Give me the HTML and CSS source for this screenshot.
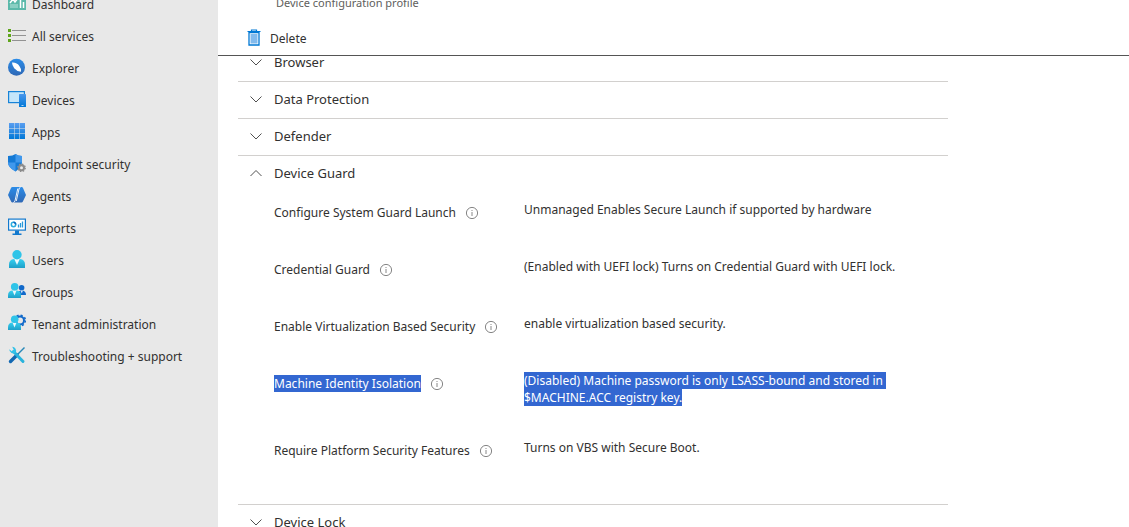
FILE: index.html
```html
<!DOCTYPE html>
<html lang="en">
<head>
  <meta charset="UTF-8" />
  <meta name="viewport" content="width=device-width, initial-scale=1.0"/>
  <title>Device configuration profile</title>
  <link rel="stylesheet" href="styles.css">
</head>
<body>
  <!-- shared gradients and symbols -->
  <svg class="defs" width="0" height="0" aria-hidden="true">
    <defs>
      <linearGradient id="blue" x1="0" y1="0" x2="0" y2="1"><stop offset="0" stop-color="#2b8ce8"/><stop offset="1" stop-color="#2f68b5"/></linearGradient>
      <linearGradient id="tiles" gradientUnits="userSpaceOnUse" x1="0" y1="1" x2="0" y2="17"><stop offset="0" stop-color="#5a9ef0"/><stop offset="1" stop-color="#0078d7"/></linearGradient>
      <linearGradient id="cyan" x1="0" y1="0" x2="0" y2="1"><stop offset="0" stop-color="#35d0f0"/><stop offset="1" stop-color="#1f9fc8"/></linearGradient>
      <symbol id="chevron-down" viewBox="0 0 14 14"><path d="M1.500 4.500L7 10l5.500-5.500" fill="none" stroke="#505050"/></symbol>
      <symbol id="chevron-up" viewBox="0 0 14 14"><path d="M1.500 10L7 4.500l5.500 5.500" fill="none" stroke="#505050"/></symbol>
      <symbol id="info" viewBox="0 0 14 14"><circle cx="7" cy="7" r="5.600" fill="none" stroke="#777" stroke-width=".9"/><path d="M7 6v4M7 4v1" stroke="#888"/></symbol>
    </defs>
  </svg>

  <div class="app">
    <nav class="sidebar">
      <ul class="nav-list">
        <li><a class="nav-link" href="#dashboard">
          <svg class="nav-icon" viewBox="0 0 18 18"><rect y="1" width="18" height="15" fill="#5bb9aa"/><path d="M2 9l3-4 2 3 3-4M12.500 14V6M15.500 14V8" fill="none" stroke="#fff" stroke-width="1.500"/><path d="M2 13h8M2 11h8" stroke="#b9e5dc"/></svg>
          Dashboard</a></li>
        <li><a class="nav-link" href="#services">
          <svg class="nav-icon" viewBox="0 0 18 18"><path d="M4 4.500h14M4 9.500h14M4 14.500h14" stroke="#929292" stroke-width="1.200"/><path d="M0 3h3v3H0zM0 8h3v3H0zM0 13h3v3H0z" fill="#5fa51b"/></svg>
          All services</a></li>
        <li><a class="nav-link" href="#explorer">
          <svg class="nav-icon" viewBox="0 0 18 18"><circle cx="8.500" cy="9.300" r="8.500" fill="url(#blue)"/><path d="M4 4.600Q9 4.300 11.500 8.300Q13.500 10.800 13 13.800Q8.500 13.300 6.200 10.300Q4 7.300 4 4.600z" fill="#fff"/></svg>
          Explorer</a></li>
        <li><a class="nav-link" href="#devices">
          <svg class="nav-icon" viewBox="0 0 18 18"><rect x=".6" y="1.600" width="15.800" height="11" fill="#c5e6fa" stroke="#1683d8" stroke-width="1.200"/><rect x="11" y="4" width="7" height="13" rx=".6" fill="url(#tiles)"/><path d="M13.500 15.500h2" stroke="#fff" stroke-width=".7"/></svg>
          Devices</a></li>
        <li><a class="nav-link" href="#apps">
          <svg class="nav-icon" viewBox="0 0 18 18"><path d="M1 1h5v5H1zM6.500 1h5v5h-5zM12 1h5v5h-5zM1 6.500h5v5H1zM6.500 6.500h5v5h-5zM12 6.500h5v5h-5zM1 12h5v5H1zM6.500 12h5v5h-5zM12 12h5v5h-5z" fill="url(#tiles)"/></svg>
          Apps</a></li>
        <li><a class="nav-link" href="#security">
          <svg class="nav-icon" viewBox="0 0 18 18"><path d="M7.500 0Q10 2 14 2v6q0 5.500-6.500 9.500Q0 13.500 0 8V2q5 0 7.500-2z" fill="#1479d4"/><path d="M7.500 0Q10 2 14 2v6.500H7.500zM0 8.500h7.500v9Q0 13.500 0 8.500z" fill="#4098ec"/><circle cx="13.500" cy="13.800" r="3.500" fill="#8c8c8c"/><circle cx="13.500" cy="13.800" r="3.700" fill="none" stroke="#8c8c8c" stroke-width="1.400" stroke-dasharray="1.500 1.400"/><circle cx="13.500" cy="13.800" r="1.500" fill="#eaeaea"/></svg>
          Endpoint security</a></li>
        <li><a class="nav-link" href="#agents">
          <svg class="nav-icon" viewBox="0 0 18 18"><path d="M4.500 1h9q1 0 1.400.8L18 9l-3.100 6.500q-.4 1-1.400 1h-9q-1 0-1.400-1L0 9l3.100-7.200Q3.500 1 4.500 1z" fill="url(#blue)"/><path d="M9.800 2.500L7 14.800Q6.500 16.300 5.400 16.500M12.600 1Q11.400 1.500 11 3L8.300 15" fill="none" stroke="#fff" stroke-width=".9"/></svg>
          Agents</a></li>
        <li><a class="nav-link" href="#reports">
          <svg class="nav-icon" viewBox="0 0 18 18"><rect x=".6" y="1.100" width="16.800" height="11" fill="#fff" stroke="#1279ce" stroke-width="1.200"/><path d="M7 12.500h4v3h2.500V17h-9v-1.500H7z" fill="#1279ce"/><circle cx="5.500" cy="6.500" r="2.200" fill="none" stroke="#2caee0" stroke-width="1.500"/><path d="M5.500 4.300a2.200 2.200 0 0 1 2.200 2.200" fill="none" stroke="#0b65bd" stroke-width="1.500"/><path d="M10.500 9.500V6.500M12.500 9.500V5M14.500 9.500V3.500" stroke="#2999da" stroke-width="1.300"/></svg>
          Reports</a></li>
        <li><a class="nav-link" href="#users">
          <svg class="nav-icon" viewBox="0 0 18 18"><path d="M1 18v-3.500q0-5 5-5.500h6q5 .5 5 5.500V18z" fill="url(#cyan)"/><path d="M6.300 9h5.400L9 15z" fill="#eef9fc"/><circle cx="9" cy="4.700" r="4.700" fill="#2fc4e8"/></svg>
          Users</a></li>
        <li><a class="nav-link" href="#groups">
          <svg class="nav-icon" viewBox="0 0 18 18"><circle cx="13.600" cy="5.700" r="2.800" fill="#1169ca"/><path d="M10 13V12q0-3.500 3.600-3.500Q18 8.500 18 13z" fill="#1169ca"/><path d="M12.500 8.500h2.500l-1.200 3z" fill="#d4e9fb"/><path d="M0 16v-2.500Q0 9 4 8.500h5q4 .5 4 5V16z" fill="url(#cyan)"/><path d="M4.500 8.500h4l-2 5z" fill="#eef9fc"/><circle cx="6.700" cy="4.700" r="3.800" fill="#2fc4e8"/></svg>
          Groups</a></li>
        <li><a class="nav-link" href="#tenant">
          <svg class="nav-icon" viewBox="0 0 18 18"><circle cx="12" cy="6.500" r="4" fill="none" stroke="#1169ca" stroke-width="2"/><circle cx="12" cy="6.500" r="5.400" fill="none" stroke="#1169ca" stroke-width="1.500" stroke-dasharray="2.100 2.140"/><path d="M0 16v-2.500Q0 9 4 8.500h5q4 .5 4 5V16z" fill="url(#cyan)"/><path d="M4.500 8.500h4l-2 5z" fill="#eef9fc"/><circle cx="6.700" cy="5.200" r="3.800" fill="#2fc4e8"/></svg>
          Tenant administration</a></li>
        <li><a class="nav-link" href="#support">
          <svg class="nav-icon" viewBox="0 0 18 18"><path d="M16.500 1.500L9 9" stroke="#2888b8" stroke-width="1.500"/><path d="M9 9l-6.500 6.500" stroke="#1268b2" stroke-width="3.400" stroke-linecap="round"/><path d="M5.500 5.500l9.500 10" stroke="#29b3dc" stroke-width="3" stroke-linecap="round"/><path d="M4.200.8a4 4 0 0 1 3.600 5.700 4 4 0 0 1-6.500-3.300L4 5.500l1.700-1.700z" fill="#32c2e8"/></svg>
          Troubleshooting + support</a></li>
      </ul>
    </nav>

    <main class="content">
      <header class="page-header">
        <p class="subtitle">Device configuration profile</p>
        <div class="toolbar">
          <button class="delete-btn" type="button">
            <svg class="delete-icon" viewBox="0 0 14 17"><path d="M2 3.500h10V16H2z" fill="#fff" stroke="#0078d4" stroke-width="1.300"/><path d="M3.500 5h7v9.500h-7z" fill="#83bbed"/><path d="M.500 2.500h13M4.500 2.500V1h5v1.500" fill="none" stroke="#0078d4" stroke-width="1.200"/></svg>
            Delete
          </button>
        </div>
      </header>

      <div class="scroll-area">
        <div class="accordion">
          <section class="group">
            <button class="group-header" type="button" aria-expanded="false"><svg class="icon"><use href="#chevron-down"/></svg>Browser</button>
          </section>
          <section class="group">
            <button class="group-header" type="button" aria-expanded="false"><svg class="icon"><use href="#chevron-down"/></svg>Data Protection</button>
          </section>
          <section class="group">
            <button class="group-header" type="button" aria-expanded="false"><svg class="icon"><use href="#chevron-down"/></svg>Defender</button>
          </section>
          <section class="group">
            <button class="group-header" type="button" aria-expanded="true"><svg class="icon"><use href="#chevron-up"/></svg>Device Guard</button>
            <dl class="settings">
              <div class="setting">
                <dt>Configure System Guard Launch <button class="info-btn" type="button" aria-label="More info"><svg class="icon"><use href="#info"/></svg></button></dt>
                <dd>Unmanaged Enables Secure Launch if supported by hardware</dd>
              </div>
              <div class="setting">
                <dt>Credential Guard <button class="info-btn" type="button" aria-label="More info"><svg class="icon"><use href="#info"/></svg></button></dt>
                <dd>(Enabled with UEFI lock) Turns on Credential Guard with UEFI lock.</dd>
              </div>
              <div class="setting">
                <dt>Enable Virtualization Based Security <button class="info-btn" type="button" aria-label="More info"><svg class="icon"><use href="#info"/></svg></button></dt>
                <dd>enable virtualization based security.</dd>
              </div>
              <div class="setting">
                <dt><mark>Machine Identity Isolation</mark> <button class="info-btn" type="button" aria-label="More info"><svg class="icon"><use href="#info"/></svg></button></dt>
                <dd><mark>(Disabled) Machine password is only LSASS-bound and stored in&nbsp;<br>$MACHINE.ACC registry key.</mark></dd>
              </div>
              <div class="setting">
                <dt>Require Platform Security Features <button class="info-btn" type="button" aria-label="More info"><svg class="icon"><use href="#info"/></svg></button></dt>
                <dd>Turns on VBS with Secure Boot.</dd>
              </div>
            </dl>
          </section>
          <section class="group">
            <button class="group-header" type="button" aria-expanded="false"><svg class="icon"><use href="#chevron-down"/></svg>Device Lock</button>
          </section>
        </div>
      </div>
    </main>
  </div>
</body>
</html>
```
FILE: styles.css
```css
:root {
  --text: #323130;
  --sidebar: #e8e8e8;
  --line: #d2d0ce;
  --select: #3367d1;
}

* {
  box-sizing: border-box;
}

body {
  margin: 0;
  height: 100vh;
  overflow: hidden;
  background: #fff;
  color: var(--text);
  font-family: "Segoe UI", "Noto Sans", sans-serif;
  font-size: 12px;
  line-height: 17px;
}

button {
  padding: 0;
  border: none;
  background: none;
  color: inherit;
  font: inherit;
  cursor: pointer;
}

.defs {
  position: absolute;
}

.app {
  display: flex;
  height: 100%;
}

/* Sidebar */
.sidebar {
  flex: 0 0 218px;
  overflow: hidden;
  background: var(--sidebar);
}

.nav-list {
  margin: -12px 0 0;
  padding: 0;
  list-style: none;
}

.nav-link {
  display: flex;
  align-items: center;
  gap: 6px;
  height: 32px;
  padding-left: 8px;
  color: var(--text);
  text-decoration: none;
}

.nav-icon {
  flex: none;
  width: 18px;
  height: 18px;
  margin-bottom: 2px;
}

/* Main area */
.content {
  display: flex;
  flex: 1;
  flex-direction: column;
  min-width: 0;
  overflow: hidden;
}

.page-header {
  flex: none;
  margin-top: -6px;
  border-bottom: 1px solid #555;
}

.subtitle {
  margin: 0;
  padding: 0 58px 10px;
  color: #605e5c;
  font-size: 11px;
}

.toolbar {
  display: flex;
  height: 34px;
  padding-left: 29px;
}

.delete-btn {
  display: flex;
  align-items: center;
  gap: 9px;
}

.delete-icon {
  width: 14px;
  height: 17px;
  margin-bottom: 2px;
}

.scroll-area {
  flex: 1;
  min-height: 0;
  overflow: hidden;
}

.accordion {
  max-width: 730px;
  margin-top: -11px;
  padding-left: 20px;
}

.group {
  border-bottom: 1px solid var(--line);
}

.group-header {
  display: flex;
  align-items: center;
  gap: 11px;
  width: 100%;
  height: 36px;
  padding: 0 0 2px 11px;
  font-size: 13px;
  text-align: left;
}

.icon {
  display: block;
  width: 14px;
  height: 14px;
}

.settings {
  margin: 0;
  padding: 9px 0 8px 36px;
}

.setting {
  display: grid;
  grid-template-columns: 250px 1fr;
  min-height: 57px;
  padding-bottom: 33px;
}

.setting dt {
  display: flex;
  align-items: center;
  align-self: start;
  gap: 9px;
  padding-top: 3px;
}

.setting dd {
  margin: 0;
}

mark {
  background: var(--select);
  color: #fff;
}
```
